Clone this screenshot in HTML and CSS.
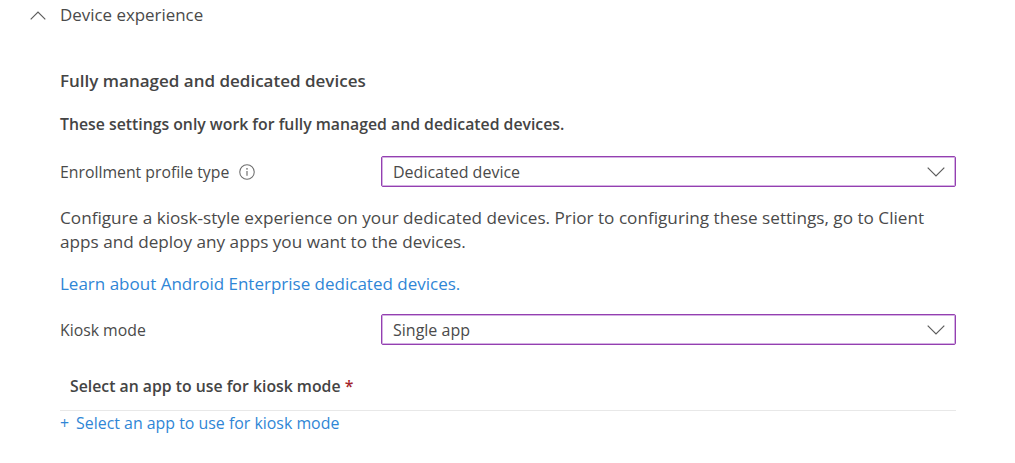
FILE: index.html
```html
<!DOCTYPE html>
<html lang="en">
<head>
<meta charset="utf-8">
<title>Device experience</title>
<link rel="stylesheet" href="styles.css">
</head>
<body>
<main class="page">
  <header class="section-head">
    <svg class="collapse" width="16" height="9" viewBox="0 0 16 9"><path d="M0.7 8.3 8 1l7.300 7.300" fill="none" stroke="#5c5c5c" stroke-width="1.200"/></svg>
    <span>Device experience</span>
  </header>
  <div class="content">
    <h2 class="title">Fully managed and dedicated devices</h2>
    <p class="note">These settings only work for fully managed and dedicated devices.</p>
    <div class="field field-first">
      <div class="label">Enrollment profile type
        <svg class="info" width="16" height="16" viewBox="0 0 15 15"><circle cx="7.500" cy="7.500" r="6.800" fill="none" stroke="#6e6e6e" stroke-width="1"/><path d="M7.500 6.500v4.500" stroke="#6e6e6e" stroke-width="1.100"/><circle cx="7.500" cy="4.500" r=".8" fill="#6e6e6e"/></svg>
      </div>
      <div class="select"><span>Dedicated device</span>
        <svg width="18" height="10" viewBox="0 0 18 10"><path d="M.7.7 9 9l8.300-8.300" fill="none" stroke="#5c5c5c" stroke-width="1.200"/></svg>
      </div>
    </div>
    <p class="desc">Configure a kiosk-style experience on your dedicated devices. Prior to configuring these settings, go to Client apps and deploy any apps you want to the devices.</p>
    <a class="link learn" href="#">Learn about Android Enterprise dedicated devices.</a>
    <div class="field field-kiosk">
      <div class="label">Kiosk mode</div>
      <div class="select"><span>Single app</span>
        <svg width="18" height="10" viewBox="0 0 18 10"><path d="M.7.7 9 9l8.300-8.300" fill="none" stroke="#5c5c5c" stroke-width="1.200"/></svg>
      </div>
    </div>
    <h3 class="subhead">Select an app to use for kiosk mode <span class="req">*</span></h3>
    <a class="link add" href="#"><span class="plus">+</span>Select an app to use for kiosk mode</a>
  </div>
</main>
</body>
</html>
```
FILE: styles.css
```css
html, body {
  margin: 0;
  background: #fff;
}
body {
  font-family: "Open Sans", "Noto Sans", sans-serif;
  font-size: 15.800px;
  line-height: 20px;
  color: #4a4a4a;
}
.page {
  width: 956px;
  padding-top: 5px;
}
.section-head {
  display: flex;
  align-items: center;
  height: 20px;
  padding-left: 30px;
  gap: 14px;
  font-size: 16.900px;
}
.content {
  margin-left: 60px;
  padding-top: 46px;
}
.title, .note, .subhead {
  font-weight: 600;
  margin: 0;
  line-height: 20px;
  color: #444;
}
.title {
  font-size: 17px;
}
.note {
  margin-top: 23px;
  font-size: 15.800px;
}
.subhead {
  font-size: 15.800px;
}
.field {
  display: flex;
  align-items: center;
}
.field-first {
  margin-top: 22px;
}
.label {
  width: 321px;
  display: flex;
  align-items: center;
  gap: 10px;
}
.select {
  flex: 1;
  box-sizing: border-box;
  height: 31px;
  border: 1px solid #9440b0;
  box-shadow: inset 0 0 0 1px rgba(170, 100, 200, .5);
  border-radius: 2px;
  padding: 0 10px 0 11px;
  display: flex;
  align-items: center;
  justify-content: space-between;
  font-size: 16px;
}
.desc {
  margin: 19px 0 0;
  line-height: 24px;
  font-size: 17.160px;
}
.link {
  display: block;
  color: #2f86d6;
  text-decoration: none;
}
.learn {
  margin-top: 20px;
  font-size: 17px;
}
.field-kiosk {
  margin-top: 20px;
}
.subhead {
  margin-top: 31px;
  padding: 0 0 14px 10px;
  border-bottom: 1px solid #e8e8e8;
}
.req {
  color: #a4262c;
}
.add {
  margin-top: 2px;
  font-size: 15.900px;
}
.plus {
  margin-right: 7px;
}
```
